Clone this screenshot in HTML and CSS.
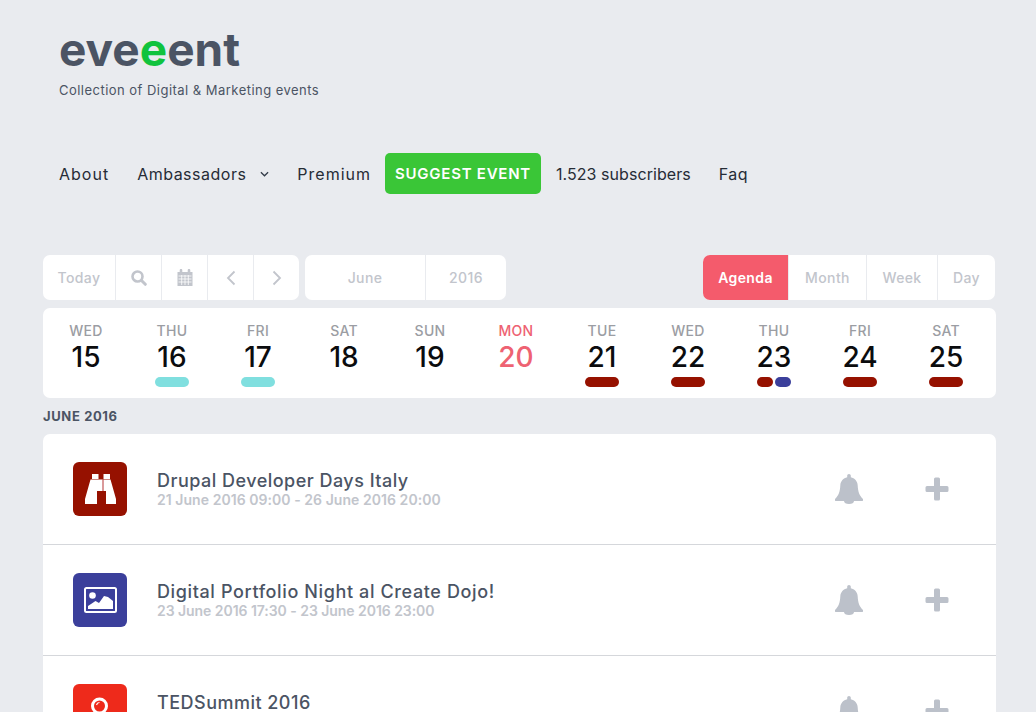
FILE: index.html
```html
<!DOCTYPE html>
<html lang="en">
<head>
<meta charset="utf-8">
<title>eveeent</title>
<link rel="stylesheet" href="styles.css">
</head>
<body>
<header class="brand">
  <h1 class="logo">eve<span class="logo-accent">e</span>ent</h1>
  <p class="tagline">Collection of Digital &amp; Marketing events</p>
</header>
<nav class="nav">
  <a class="nav-link nav-about">About</a>
  <a class="nav-link nav-drop">Ambassadors
    <svg class="caret" viewBox="0 0 10 6" width="9" height="6"><path d="M1 1l4 4 4-4" fill="none" stroke="#333b48" stroke-width="1.4"/></svg>
  </a>
  <a class="nav-link nav-premium">Premium</a>
  <a class="nav-cta">SUGGEST EVENT</a>
  <a class="nav-link nav-subs">1.523 subscribers</a>
  <a class="nav-link">Faq</a>
</nav>
<main class="main">
  <div class="toolbar">
    <div class="btn-group">
      <span class="tool tool-today">Today</span>
      <span class="tool tool-icon"><svg viewBox="0 0 16 16" width="16" height="16"><circle cx="6.5" cy="6.500" r="5" fill="none" stroke="#c2c5cc" stroke-width="2.600"/><path d="M10.500 10.500l3.800 3.800" stroke="#c2c5cc" stroke-width="3" stroke-linecap="round"/></svg></span>
      <span class="tool tool-icon"><svg viewBox="0 0 16 17" width="16" height="17"><path d="M.5 3h15v14H.5z" fill="#c2c5cc"/><path d="M4 1.200v3M12 1.200v3" stroke="#c2c5cc" stroke-width="2.600" stroke-linecap="round"/><path d="M1.500 7h13M1.500 10h13M1.500 13h13M4.700 6v10M8 6v10M11.300 6v10" stroke="#fff" stroke-width=".8"/></svg></span>
      <span class="tool tool-icon"><svg viewBox="0 0 10 16" width="10" height="16"><path d="M8.500 1.500L2 8l6.500 6.500" fill="none" stroke="#c2c5cc" stroke-width="1.800"/></svg></span>
      <span class="tool tool-icon"><svg viewBox="0 0 10 16" width="10" height="16"><path d="M1.500 1.500L8 8l-6.500 6.500" fill="none" stroke="#c2c5cc" stroke-width="1.800"/></svg></span>
    </div>
    <div class="btn-group btn-group-date">
      <span class="tool tool-month">June</span>
      <span class="tool tool-year">2016</span>
    </div>
    <div class="btn-group btn-group-view">
      <span class="view view-active">Agenda</span>
      <span class="view view-month">Month</span>
      <span class="view view-week">Week</span>
      <span class="view view-day">Day</span>
    </div>
  </div>
  <section class="strip">
    <div class="day"><span class="dow">WED</span><span class="num">15</span><span class="marks"></span></div>
    <div class="day"><span class="dow">THU</span><span class="num">16</span><span class="marks"><i class="mark mark-teal"></i></span></div>
    <div class="day"><span class="dow">FRI</span><span class="num">17</span><span class="marks"><i class="mark mark-teal"></i></span></div>
    <div class="day"><span class="dow">SAT</span><span class="num">18</span><span class="marks"></span></div>
    <div class="day"><span class="dow">SUN</span><span class="num">19</span><span class="marks"></span></div>
    <div class="day day-today"><span class="dow">MON</span><span class="num">20</span><span class="marks"></span></div>
    <div class="day"><span class="dow">TUE</span><span class="num">21</span><span class="marks"><i class="mark mark-red"></i></span></div>
    <div class="day"><span class="dow">WED</span><span class="num">22</span><span class="marks"><i class="mark mark-red"></i></span></div>
    <div class="day"><span class="dow">THU</span><span class="num">23</span><span class="marks"><i class="mark mark-half mark-red"></i><i class="mark mark-half mark-blue"></i></span></div>
    <div class="day"><span class="dow">FRI</span><span class="num">24</span><span class="marks"><i class="mark mark-red"></i></span></div>
    <div class="day"><span class="dow">SAT</span><span class="num">25</span><span class="marks"><i class="mark mark-red"></i></span></div>
  </section>
  <h2 class="month-title">JUNE 2016</h2>
  <section class="events">
    <article class="event">
      <div class="thumb thumb-red"><svg viewBox="0 0 31 30" width="31" height="30"><path d="M7 0h6.500v5H7zM18.500 0H25v5h-6.500z" fill="#fff"/><path d="M5.500 5.500h12V17H12v13H0v-5z" fill="#fff"/><path d="M18.500 5.500h7L31 25v5H21V17h-2.500z" fill="#fff"/><path d="M17.500 5.500h1V17h-1z" fill="#e9a9b4"/></svg></div>
      <div class="event-text"><h3 class="event-title">Drupal Developer Days Italy</h3><p class="event-date">21 June 2016 09:00 - 26 June 2016 20:00</p></div>
      <div class="event-actions">
        <svg class="bell" viewBox="0 0 28 30" width="28" height="30"><path d="M14 0c1 0 1.800.8 1.800 1.800v1.500c3.800.8 6.700 3.800 6.900 8.200.3 6.500 1.800 10 5.300 13.500v1.500c0 .3-.2.5-.5.5H19c0 1.800-2 3-5 3s-5-1.200-5-3H.5c-.3 0-.5-.2-.5-.5V25c3.500-3.500 5-7 5.300-13.500.2-4.400 3.100-7.400 6.900-8.200V1.800C12.200.8 13 0 14 0z" fill="#bcc1ca"/></svg>
        <svg class="plus" viewBox="0 0 24 24" width="24" height="24"><path d="M9 2a1.500 1.500 0 0 1 1.500-1.500h3A1.500 1.500 0 0 1 15 2v7h7a1.500 1.500 0 0 1 1.500 1.500v3A1.500 1.500 0 0 1 22 15h-7v7a1.500 1.500 0 0 1-1.500 1.500h-3A1.500 1.500 0 0 1 9 22v-7H2A1.500 1.500 0 0 1 .5 13.500v-3A1.500 1.500 0 0 1 2 9h7z" fill="#bcc1ca"/></svg>
      </div>
    </article>
    <article class="event">
      <div class="thumb thumb-blue"><svg viewBox="0 0 33 26" width="33" height="26"><rect x="1" y="1" width="31" height="24" rx="1.500" fill="none" stroke="#fff" stroke-width="2"/><circle cx="8.500" cy="8.500" r="3.300" fill="#fff"/><path d="M4 22v-3l7.500-5 3.500 2 5-7 4 1 5 4v8z" fill="#fff"/></svg></div>
      <div class="event-text"><h3 class="event-title event-title-long">Digital Portfolio Night al Create Dojo!</h3><p class="event-date event-date-tight">23 June 2016 17:30 - 23 June 2016 23:00</p></div>
      <div class="event-actions">
        <svg class="bell" viewBox="0 0 28 30" width="28" height="30"><path d="M14 0c1 0 1.800.8 1.800 1.800v1.500c3.800.8 6.700 3.800 6.900 8.200.3 6.500 1.800 10 5.300 13.500v1.500c0 .3-.2.5-.5.5H19c0 1.800-2 3-5 3s-5-1.200-5-3H.5c-.3 0-.5-.2-.5-.5V25c3.500-3.500 5-7 5.300-13.500.2-4.400 3.100-7.400 6.900-8.200V1.800C12.200.8 13 0 14 0z" fill="#bcc1ca"/></svg>
        <svg class="plus" viewBox="0 0 24 24" width="24" height="24"><path d="M9 2a1.500 1.500 0 0 1 1.500-1.500h3A1.500 1.500 0 0 1 15 2v7h7a1.500 1.500 0 0 1 1.500 1.500v3A1.500 1.500 0 0 1 22 15h-7v7a1.500 1.500 0 0 1-1.500 1.500h-3A1.500 1.500 0 0 1 9 22v-7H2A1.500 1.500 0 0 1 .5 13.500v-3A1.500 1.500 0 0 1 2 9h7z" fill="#bcc1ca"/></svg>
      </div>
    </article>
    <article class="event">
      <div class="thumb thumb-orange"><svg viewBox="0 0 32 32" width="32" height="32"><circle cx="15.500" cy="11" r="7" fill="none" stroke="#fff" stroke-width="3"/><path d="M12.500 10a3.500 3.500 0 0 1 3-2.500" fill="none" stroke="#fff" stroke-width="1.200"/><path d="M12 19h7v6h-7z" fill="#fff"/></svg></div>
      <div class="event-text"><h3 class="event-title">TEDSummit 2016</h3><p class="event-date">&nbsp;</p></div>
      <div class="event-actions">
        <svg class="bell" viewBox="0 0 28 30" width="28" height="30"><path d="M14 0c1 0 1.800.8 1.800 1.800v1.500c3.800.8 6.700 3.800 6.900 8.200.3 6.500 1.800 10 5.300 13.500v1.500c0 .3-.2.5-.5.5H19c0 1.800-2 3-5 3s-5-1.200-5-3H.5c-.3 0-.5-.2-.5-.5V25c3.500-3.500 5-7 5.300-13.500.2-4.400 3.100-7.400 6.900-8.200V1.800C12.200.8 13 0 14 0z" fill="#bcc1ca"/></svg>
        <svg class="plus" viewBox="0 0 24 24" width="24" height="24"><path d="M9 2a1.500 1.500 0 0 1 1.500-1.500h3A1.500 1.500 0 0 1 15 2v7h7a1.500 1.500 0 0 1 1.500 1.500v3A1.500 1.500 0 0 1 22 15h-7v7a1.500 1.500 0 0 1-1.500 1.500h-3A1.500 1.500 0 0 1 9 22v-7H2A1.500 1.500 0 0 1 .5 13.500v-3A1.500 1.500 0 0 1 2 9h7z" fill="#bcc1ca"/></svg>
      </div>
    </article>
  </section>
</main>
</body>
</html>
```

FILE: styles.css
```css
* { box-sizing: border-box; }
html, body { height: 712px; overflow: hidden; }
body {
  margin: 0;
  background: #e9ebef;
  font-family: "Inter", "Noto Sans", sans-serif;
  color: #4b5464;
}
.brand { padding: 26px 0 0 59px; }
.logo {
  margin: 0;
  font-size: 46px;
  line-height: 46px;
  font-weight: 700;
  color: #4b5464;
  letter-spacing: 0;
}
.logo-accent { color: #10c33e; }
.tagline { margin: 9px 0 0; font-size: 13px; line-height: 18px; color: #4b5464; letter-spacing: .47px; }
.nav { display: flex; align-items: center; margin-top: 54px; padding-left: 59px; height: 41px; }
.nav-link { font-size: 16px; font-weight: 400; color: #262c36; margin-right: 28px; letter-spacing: .5px; white-space: nowrap; }
.nav-about { letter-spacing: 1px; }
.nav-premium { letter-spacing: 1px; }
.nav-subs { letter-spacing: .06px; }
.nav-drop { display: flex; align-items: center; gap: 14px; }
.nav-cta {
  display: flex; align-items: center;
  height: 41px; padding: 0 10px;
  margin: 0 15px 0 -14px;
  background: #3ac637; color: #fff;
  border-radius: 5px;
  font-size: 15px; font-weight: 600;
  letter-spacing: .75px;
  white-space: nowrap;
}
.main { margin: 61px 40px 0 43px; }
.toolbar { display: flex; height: 45px; gap: 6px; }
.btn-group { display: flex; background: #fff; border-radius: 7px; overflow: hidden; }
.btn-group-view { margin-left: auto; margin-right: 1px; }
.tool, .view {
  display: flex; align-items: center; justify-content: center;
  height: 45px;
  font-size: 14px; font-weight: 500; color: #c2c5cc;
  letter-spacing: .4px;
  border-left: 1px solid #e9ebef;
}
.tool:first-child, .view:first-child { border-left: 0; }
.tool-today { width: 72px; }
.tool-icon { width: 46px; }
.tool-month { width: 120px; }
.tool-year { width: 81px; }
.view-active { width: 85px; background: #f45b6c; color: #fff; font-weight: 600; }
.view-month { width: 78px; }
.view-week { width: 71px; }
.view-day { width: 58px; }
.strip {
  display: grid; grid-template-columns: repeat(11, 86px);
  height: 90px; margin-top: 8px; padding: 15px 0 0 0;
  background: #fff; border-radius: 7px;
}
.day { display: flex; flex-direction: column; align-items: center; }
.dow { font-size: 14px; line-height: 16px; font-weight: 500; color: #9b9da3; letter-spacing: .3px; }
.num { font-size: 28px; line-height: 32px; font-weight: 500; color: #0b0c0e; margin-top: 2px; }
.marks { display: flex; gap: 2px; margin-top: 4px; height: 10px; }
.mark { display: block; width: 34px; height: 10px; border-radius: 5px; }
.mark-half { width: 16px; }
.mark-teal { background: #80dfdf; }
.mark-red { background: #961100; }
.mark-blue { background: #3b3f9b; }
.day-today .dow, .day-today .num { color: #ee6272; }
.month-title { margin: 10px 0 9px; font-size: 13px; line-height: 17px; font-weight: 700; color: #4b5464; letter-spacing: .63px; }
.events { background: #fff; border-radius: 7px 7px 0 0; }
.event { display: flex; align-items: center; height: 111px; padding: 0 47px 0 30px; border-bottom: 1px solid #d5d7db; }
.thumb { display: flex; align-items: center; justify-content: center; flex: none; width: 54px; height: 54px; border-radius: 6px; }
.thumb-red { background: #961100; }
.thumb-blue { background: #3b3f9b; }
.thumb-orange { background: #ee2a1b; }
.event-text { flex: 1; margin-left: 30px; padding-top: 2px; }
.event-title { margin: 0; font-size: 18px; line-height: 20px; font-weight: 500; color: #4b5464; letter-spacing: .48px; }
.event-title-long { letter-spacing: .62px; }
.event-date { margin: 0; font-size: 14px; line-height: 18px; font-weight: 600; color: #c2c5cc; letter-spacing: .05px; }
.event-date-tight { letter-spacing: -.05px; }
.event-actions { display: flex; align-items: center; gap: 62px; }
.bell, .plus { display: block; }
```
